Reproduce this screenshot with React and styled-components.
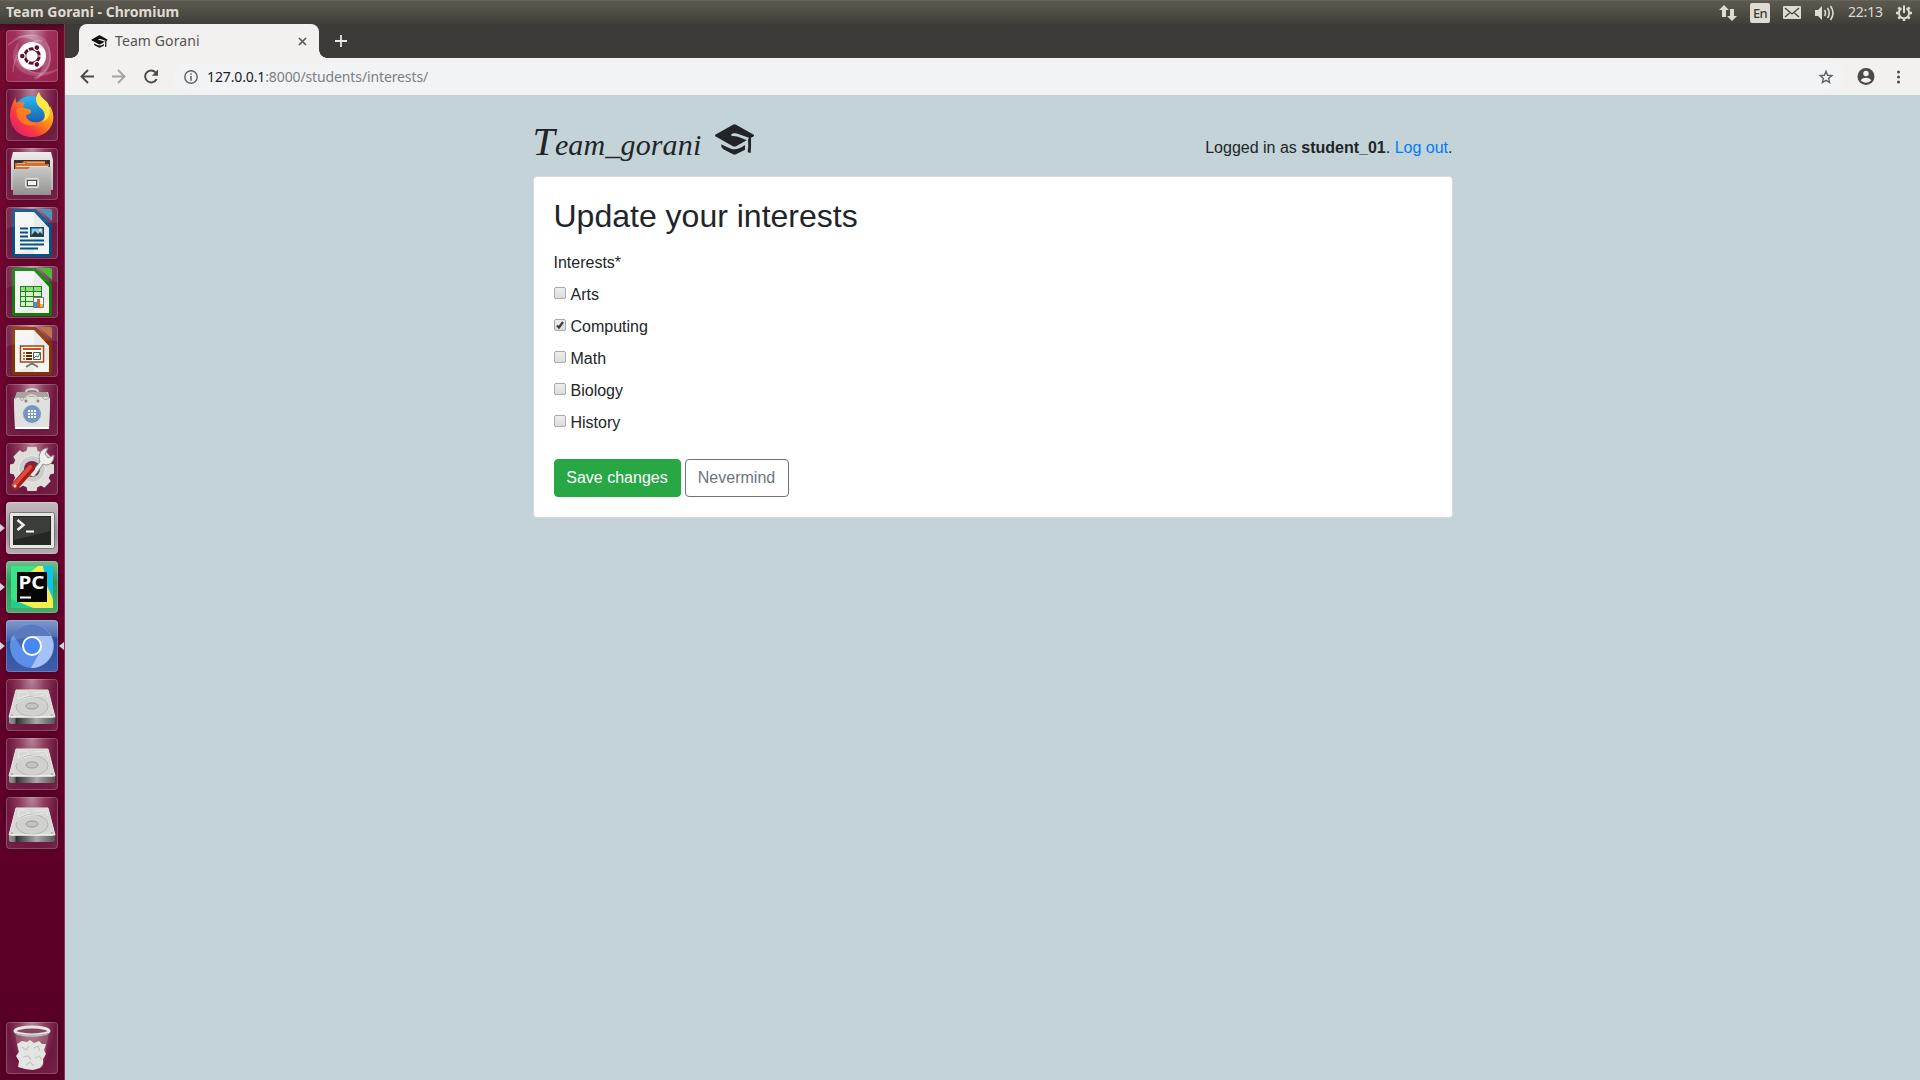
import React from "react";
import styled, { createGlobalStyle } from "styled-components";

const Global = createGlobalStyle`
  *, *::before, *::after { box-sizing: border-box; }
  body { margin: 0; background: #c3d3d7; overflow: hidden; font-family: "Liberation Sans", Arial, sans-serif; }
  svg { display: block; flex: none; }
`;

const Desktop = styled.div`
  display: flex; flex-direction: column; width: 1920px; height: 1080px; overflow: hidden;
`;
const Panel = styled.header`
  display: flex; align-items: center; justify-content: space-between; height: 24px; flex: none;
  padding: 0 8px 0 6px; border-top: 1px solid #66645a;
  background: linear-gradient(#5c5a50, #403e39);
  color: #dfdbd2; font-family: "Noto Sans", sans-serif;
`;
const WindowTitle = styled.span`
  font-size: 14px; font-weight: 700; line-height: 22px; height: 24px; letter-spacing: 0.02px; white-space: nowrap;
`;
const Tray = styled.div`display: flex; align-items: center; height: 22px;`;
const TrayItem = styled.div`margin-left: ${(p) => p.$gap}px; flex: none;`;
const Language = styled.div`
  width: 20px; height: 20px; border-radius: 2px; background: #dfdbd2; color: #3c3b37;
  font: 500 13px/21px "Noto Sans", sans-serif; text-align: center; letter-spacing: -0.8px;
`;
const Clock = styled.div`
  width: 35px; height: 24px; font-size: 14px; line-height: 22px; white-space: nowrap; letter-spacing: -0.2px;
`;
const Workspace = styled.div`display: flex; flex: 1; min-height: 0;`;

const Launcher = styled.nav`
  display: flex; flex-direction: column; width: 65px; flex: none; padding: 6px 0 6px;
  border-right: 1px solid #8c3057;
  background: linear-gradient(#4a0820 0, #720a2e 8px, #6e0530 300px, #64002b 620px, #570025 100%);
`;
const Slot = styled.div`
  display: flex; align-items: center; height: 52px; flex: none; margin-bottom: 7px;
  &:last-child { margin: auto 0 0; }
`;
const Marker = styled.i`
  width: 0; height: 0; margin-right: ${(p) => (p.$end ? 0 : 1)}px; margin-left: ${(p) => (p.$end ? 1 : 0)}px;
  border: 4px solid transparent; border-${(p) => (p.$end ? "right" : "left")}: 5px solid ${(p) => (p.$on ? "#d9d3d6" : "transparent")};
  border-${(p) => (p.$end ? "left" : "right")}: 0;
`;
const Tile = styled.div`
  width: 52px; height: 52px; border-radius: 4px; overflow: hidden;
  background: ${(p) => p.$bg || "radial-gradient(ellipse at 50% 0, #b8869b 0, #8b3c5c 35%, #6f1740 65%, #742447 100%)"};
  box-shadow: inset 0 0 0 1px rgba(255,255,255,.2), 0 0 4px rgba(40,0,20,.55);
`;

const Browser = styled.section`display: flex; flex-direction: column; flex: 1; min-width: 0;`;
const TabStrip = styled.div`
  display: flex; align-items: center; height: 34px; flex: none; padding-left: 14px; background: #3d3b37;
`;
const Tab = styled.div`
  display: flex; align-items: center; position: relative; width: 240px; height: 34px; padding: 0 12px 0 12px;
  border-radius: 8px 8px 0 0; background: #f2f1f0; color: #555350;
  &::before, &::after {
    content: ""; position: absolute; bottom: 0; width: 8px; height: 8px;
  }
  &::before { left: -8px; background: radial-gradient(circle at 0 0, transparent 7.5px, #f2f1f0 8px); }
  &::after { right: -8px; background: radial-gradient(circle at 100% 0, transparent 7.5px, #f2f1f0 8px); }
`;
const TabTitle = styled.span`
  flex: 1; margin-left: 7px; font: 14px/34px "Noto Sans", sans-serif; letter-spacing: 0.1px; white-space: nowrap;
`;
const NewTab = styled.div`margin-left: 16px;`;
const Toolbar = styled.div`
  display: flex; align-items: center; height: 37px; flex: none; padding: 0 15px 0 15px; background: #f2f1f0;
`;
const NavButtons = styled.div`display: flex; gap: 18px; margin-right: 14px;`;
const Omnibox = styled.div`
  display: flex; align-items: center; flex: 1; height: 28px; border-radius: 14px; padding: 0 10px 0 11px; background: #f1f3f5;
`;
const Url = styled.span`
  flex: 1; margin-left: 9px; font: 14px/28px "Noto Sans", sans-serif; letter-spacing: -0.12px; color: #7d8084; white-space: nowrap;
`;
const Host = styled.span`color: #202124;`;
const ToolbarEnd = styled.div`display: flex; align-items: center; gap: 13px; margin-left: 13px;`;

const Page = styled.main`flex: 1; background: #c3d3d7; color: #212529; font-size: 16px; line-height: 24px;`;
const Container = styled.div`width: 920px; margin: 0 auto;`;
const Masthead = styled.div`display: flex; justify-content: space-between; height: 81px;`;
const Brand = styled.div`display: flex; padding-top: 25px;`;
const BrandName = styled.span`
  width: 181.5px; font: italic 400 30px/44px "Liberation Serif", serif; letter-spacing: 0.15px; white-space: nowrap;
  &::first-letter { font-size: 40px; }
`;
const CapHolder = styled.div`padding-top: 4px;`;
const Account = styled.div`padding-top: 41px; white-space: nowrap;`;
const Link = styled.a`color: #007bff; text-decoration: none;`;
const Card = styled.div`
  height: 342px; padding: 20px; background: #fff; border: 1px solid #d5dadc; border-radius: 4px;
`;
const Heading = styled.h2`margin: 0 0 16px; font-size: 32px; font-weight: 400; line-height: 38px;`;
const Legend = styled.div`height: 24px; margin-bottom: 8px;`;
const Option = styled.label`display: flex; align-items: flex-start; height: 24px; margin-bottom: 8px;`;
const Box = styled.span`
  display: block; width: 12px; height: 12px; margin: 4px 5px 0 0; border: 1px solid #aaa; border-radius: 2px;
  background: linear-gradient(#ededed, #dcdcdc); flex: none;
`;
const Actions = styled.div`display: flex; gap: 4px; margin-top: 24px;`;
const Button = styled.button`
  width: ${(p) => p.$w}px; height: 38px; padding: 0; border-radius: 4px; font: 16px/24px "Liberation Sans", Arial, sans-serif;
  border: 1px solid ${(p) => (p.$primary ? "#28a745" : "#6c757d")};
  background: ${(p) => (p.$primary ? "#28a745" : "#fff")}; color: ${(p) => (p.$primary ? "#fff" : "#6c757d")};
`;

const Icon = ({ children, w = 52, h = 52, box }) => (
  <svg width={w} height={h} viewBox={box || `0 0 ${w} ${h}`} fill="none">{children}</svg>
);

const GradCap = ({ w, h, color, bg }) => (
  <Icon w={w} h={h} box="0 0 41 31">
    <path d="M1.7 10.4 18.5.9q2-1.1 4 0l16.8 9.5q1.5 1 0 2l-16.8 9.5q-2 1.100-4 0L1.7 12.4q-1.5-1 0-2Z" fill={color} />
    <path d="M17 10.7c2-2 5-1.700 8-.4l12 4.200-2 2.500-11-4.200c-3-.9-6 .1-7-2.100Z" fill={bg} />
    <path d="M7 20.500c4.500 1.200 8.500 4.800 13.500 4.800s9-3.600 10.500-4v4.500L22 30.200q-1.500.8-3 0L9.300 25.300Q7 24 7 20.500Z" fill={color} />
    <path d="m34 15 3-2.500q.3 9-.3 16.500l-3-.8q1-6 .3-13.200Z" fill={color} />
  </Icon>
);

const Ubuntu = () => (
  <Icon>
    <path d="M2 15C19 0 39 2 43 19s-5 26-15 29M7 42C8 23 20 9 36 11M51 40C31 48 12 40 10 25" stroke="#fff" strokeOpacity=".2" strokeWidth="1.500" />
    <path d="M2 13C18-2 44 5 45 26 46 38 38 47 28 50 40 40 42 18 26 10 17 6 8 7 2 13Z" fill="#fff" opacity=".2" />
    <path d="M50 41C35 51 9 46 7 28 6 22 9 16 13 12c-4 14 5 29 18 31 8 1 15 0 19-2Z" fill="#fff" opacity=".16" />
    <circle cx="26" cy="26" r="14" fill="#fff" />
    <circle cx="26" cy="26" r="7.200" stroke="#620d31" strokeWidth="3" />
    {[60, 180, 300].map((a) => (
      <g key={a} transform={`rotate(${a} 26 26)`}>
        <circle cx="35.500" cy="26" r="3.200" fill="#fff" />
        <circle cx="35.700" cy="26" r="2.300" fill="#620d31" />
      </g>
    ))}
    {[0, 120, 240].map((a) => <path key={a} d="M31.500 26h4" stroke="#fff" strokeWidth="1.200" transform={`rotate(${a} 26 26)`} />)}
  </Icon>
);

const Firefox = () => (
  <Icon>
    <defs>
      <linearGradient id="fox" x1="44" y1="8" x2="10" y2="43" gradientUnits="userSpaceOnUse">
        <stop stopColor="#ffdf2e" /><stop offset=".42" stopColor="#ff9115" /><stop offset=".75" stopColor="#fa3741" /><stop offset="1" stopColor="#e52270" />
      </linearGradient>
      <linearGradient id="globe" x2="0" y2="1"><stop stopColor="#28b8f2" /><stop offset="1" stopColor="#123e9b" /></linearGradient>
    </defs>
    <circle cx="25" cy="25" r="18" fill="url(#globe)" />
    <path d="M10 8c-1 3 0 5 1 6 2-1 6-1 8 0-2 2-2 4-1 6 3 0 6 0 7 2s-3 4-5 4c0 5 7 9 13 7 7-2 7-9 3-13-6-4-8-11-3-17 1 6 7 8 9 12 1 2 2 4 2 2 3 5 4 10 3 15-2 10-11 16-21 16C13 48 4 39 4 26c0-5 2-12 6-18Z" fill="url(#fox)" />
    <path d="M33 3c-5 6-3 13 3 17 4 4 4 10 0 13 9-3 10-12 5-20-3-3-7-5-8-10Z" fill="#ffe84a" />
    <path d="M10 20c6-3 14 0 15 2-1 3-5 3-5 4-1 5 7 9 13 7-6 6-19 4-22-6Z" fill="#ff8c1e" opacity=".7" />
  </Icon>
);

const Files = () => (
  <Icon>
    <defs>
      <linearGradient id="metal" x2="0" y2="1"><stop stopColor="#eee" /><stop offset="1" stopColor="#b0b0ad" /></linearGradient>
      <linearGradient id="drawer" x2="0" y2="1"><stop stopColor="#c9c9c7" /><stop offset="1" stopColor="#929290" /></linearGradient>
    </defs>
    <path d="M7 4h38l2 8v30H5V12Z" fill="url(#metal)" />
    <path d="M8 12h36v10H8Z" fill="#37332e" />
    <path d="M9 15h7l2-2h21v3h4v6H9Z" fill="#cf7032" />
    <path d="M10 18.500h32" stroke="#f7dcc0" /><path d="M11 15.500h8m2-1h18" stroke="#e9a877" />
    <path d="M7 21h15l2-2h21v28H7Z" fill="url(#drawer)" />
    <rect x="19.500" y="30.500" width="13" height="9" rx="1" fill="#bbb" stroke="#e4e4e4" />
    <rect x="21.500" y="32.500" width="9" height="5" fill="#f5f5f5" stroke="#555" />
  </Icon>
);

const Doc = ({ color, fold, children }) => (
  <Icon>
    <path d="M8 2h22l16 16v30q0 2-2 2H8q-2 0-2-2V4q0-2 2-2Z" fill={color} />
    <path d="M9 5h19l15 16v26H9Z" fill="#f5f5f4" />
    <path d="M28 5v42H9l34-12V21Z" fill="#ccc" opacity=".28" />
    <path d="M33 2h11q2 0 2 2v10Z" fill={fold} />
    {children}
    <path d="M0 0h52v16Q24 14 0 22Z" fill="#fff" opacity=".09" />
  </Icon>
);
const Writer = () => (
  <Doc color="#075187" fold="#3c8ab8">
    <path d="M14 21.500h8M14 25.500h8M14 29.500h8M14 33.500h24M14 37.500h24M14 41.500h18" stroke="#075187" strokeWidth="2" />
    <path d="M24 20h14v10H24Z" fill="#064b7d" /><path d="M25.500 21.500h11v7h-11Z" fill="#8acaf0" />
    <path d="m25 29 4-5 3 3 2-2 4 4Z" fill="#333" /><circle cx="34.500" cy="23" r="1.500" fill="#ffe57c" />
  </Doc>
);
const Calc = () => (
  <Doc color="#137a0b" fold="#36b629">
    <path d="M14 20h22v21H14Z" fill="#19851c" />
    {[21, 26, 31, 36].map((y, i) => <path key={y} d={`M15 ${y}h4v4h-4Zm5 0h7v4h-7Zm8 0h7v4h-7Z`} fill={i ? "#d4f4c6" : "#94db84"} />)}
    <path d="M27.500 31.500h10v10h-10Z" fill="#f6f6f6" stroke="#777" />
    <path d="M28 36h3v5h-3Z" fill="#249be5" /><path d="M31 33h3v8h-3Z" fill="#e35b23" /><path d="M34 38h3v3h-3Z" fill="#f4b61c" />
  </Doc>
);
const Impress = () => (
  <Doc color="#853400" fold="#b76835">
    <path d="M14.500 21h23v16h-23Z" fill="#fff" stroke="#a94309" strokeWidth="1.500" />
    <path d="M17 24h18" stroke="#c4571b" strokeWidth="2" />
    <path d="M17 28h2m-2 3h2m-2 3h2" stroke="#e36a2c" strokeWidth="2" />
    <path d="M20 28h6m-6 3h6m-6 3h6" stroke="#6b2707" strokeWidth="2" />
    <path d="M27.500 27.500h7v7h-7Z" fill="#f3f3f3" stroke="#555" /><path d="m28 33 2-2 2 1 2-4" stroke="#1a9a2a" />
    <path d="M26 37v2m-6 3 5-3h2l5 3" stroke="#777" strokeWidth="2" />
  </Doc>
);
const Software = () => (
  <Icon>
    <path d="M11 8h31l2 9-1 28H9L8 17Z" fill="#dfdfdc" />
    <path d="m11 8-3 9 5-4 3 5 4-5h23l-2-5Z" fill="#a4a4a1" />
    <path d="M8 14h36l-1 31H9Z" fill="#e0e0dc" /><path d="M9 44h34" stroke="#fff" strokeWidth="2" />
    <path d="m9 15 3-4 4 6 3-5h16l4 4 4-2" stroke="#aaaaa6" strokeWidth="1" />
    <path d="M20 8c0-4 12-4 12 0M19 17c1-8 12-8 13 0" stroke="#d2d2cd" strokeWidth="2" />
    <circle cx="20" cy="17" r="1.500" fill="#888" /><circle cx="32" cy="17" r="1.500" fill="#888" />
    <circle cx="26" cy="30" r="9" fill="#7297c7" />
    {[26, 29, 32].map((y) => <path key={y} d={`M22 ${y}h2v2h-2Zm3 0h2v2h-2Zm3 0h2v2h-2Z`} fill="#fff" />)}
  </Icon>
);
const Settings = () => (
  <Icon>
    {[0, 45, 90, 135].map((a) => <path key={a} d="M21.500 4h9l1 4v36l-1 4h-9l-1-4V8Z" fill="#dddddb" transform={`rotate(${a} 26 26)`} />)}
    <circle cx="26" cy="26" r="19" fill="#dedddb" /><circle cx="26" cy="26" r="13.500" fill="#cbcbc9" stroke="#eee" />
    <circle cx="26" cy="26" r="8" fill="#73294d" />
    <path d="m23 32 11-13c-3-8 2-14 8-14l-3 6 3 4 6-3c0 8-6 12-11 9L28 34Z" fill="#eeeeec" stroke="#8f8f8c" />
    <path d="m9 43 16-18" stroke="#a61d1d" strokeWidth="8" strokeLinecap="round" />
    <path d="m8 42 16-18" stroke="#e4493d" strokeWidth="4" strokeLinecap="round" />
    <circle cx="9" cy="43" r="1.500" fill="#eee" />
  </Icon>
);
const Terminal = () => (
  <Icon>
    <rect x="3.500" y="10.500" width="45" height="36" rx="2" fill="#e8e6e4" stroke="#777" />
    <path d="M7 14h38v29H7Z" fill="#252725" /><path d="M8 15h36v14L8 38Z" fill="#555854" opacity=".45" />
    <path d="m11.500 18 6 5-6 5" stroke="#eee" strokeWidth="2.500" /><path d="M20 29.500h8" stroke="#fff" strokeWidth="2" />
  </Icon>
);
const PcText = styled.text`font: 700 18px "Noto Sans", sans-serif; fill: #fff;`;
const PyCharm = () => (
  <Icon>
    <path d="M5 5h42v42H5Z" fill="#35dc84" /><path d="M5 5h30L14 40H5Z" fill="#3be28a" />
    <path d="m22 13 10-8h5l5 18 5 16v8H27l-15-6Z" fill="#f5ef4d" /><path d="M37 5h10v32l-6-12Z" fill="#0fc5e7" />
    <path d="M5 38v9h22Z" fill="#28cb8a" />
    <path d="M11 11h30v30H11Z" fill="#050505" /><PcText x="12.500" y="28" textLength="26" lengthAdjust="spacingAndGlyphs">PC</PcText><path d="M14 36.500h11" stroke="#fff" strokeWidth="2" />
  </Icon>
);
const Chromium = () => (
  <Icon>
    <circle cx="26" cy="26" r="22" fill="#5d8fe8" />
    <path d="M7 15a22 22 0 0 1 38 1H26L18 31Z" fill="#4268b4" />
    <path d="M45 16H26l9 14-10 18a22 22 0 0 0 20-32Z" fill="#a5c2f6" />
    <circle cx="26" cy="26" r="10" fill="#fff" /><circle cx="26" cy="26" r="8" fill="#4688f1" />
    <path d="M0 0h52v17Q27 14 0 22Z" fill="#fff" opacity=".12" />
  </Icon>
);
const Disk = () => (
  <Icon>
    <defs><linearGradient id="edge" x2="1"><stop stopColor="#999" /><stop offset=".12" stopColor="#777" /><stop offset=".16" stopColor="#303030" /><stop offset=".6" stopColor="#aaa" /><stop offset="1" stopColor="#555" /></linearGradient></defs>
    <path d="M3 38h46v5q0 2-2 2H5q-2 0-2-2Z" fill="url(#edge)" />
    <path d="M10 11h32l7 27H3Z" fill="#d7d7d5" stroke="#e6e6e6" />
    <ellipse cx="26" cy="27.500" rx="16" ry="10" fill="#d1d1d0" stroke="#b4b4b4" />
    <path d="m13 13 8 0 2 3-11 4Zm14 1 13-1 2 6M10 25c7-9 24-6 29-10" stroke="#eee" strokeWidth=".8" />
    <ellipse cx="26" cy="27" rx="6" ry="3" fill="#c4c4c4" stroke="#999" /><path d="M5 38h42" stroke="#fff" />
    <circle cx="6" cy="36" r=".8" fill="#888" /><circle cx="46" cy="36" r=".8" fill="#888" />
  </Icon>
);
const Trash = () => (
  <Icon>
    <path d="m9 10 5 35q11 5 23 0l6-35Z" fill="#ddd" opacity=".22" />
    <path d="m11 22 5-3 5 1 3-2 4 3 5-2 3 3 4 0-2 6 2 4-3 5v5l-3 4-7 2-8-1-7-2 1-6-3-5 3-4Z" fill="#e4e4e2" />
    <path d="m16 25 4 3 3-4M28 26l4-2 2 5M17 35l5-1 3 4M29 36l4-2 3 4M20 43l4-3 4 4" stroke="#c4c4c0" strokeWidth="1.200" />
    <ellipse cx="26" cy="9" rx="17" ry="4" fill="#874564" stroke="#e5e5e3" strokeWidth="3" />
    <path d="M9 11c5 3 29 3 34 0" stroke="#aaa" />
  </Icon>
);

const APPS = [
  { art: Ubuntu, bg: "radial-gradient(ellipse at 50% 0,#c18ba0,#a1305c 45%,#97204c)" },
  { art: Firefox }, { art: Files }, { art: Writer }, { art: Calc }, { art: Impress }, { art: Software }, { art: Settings },
  { art: Terminal, bg: "linear-gradient(#c5bcc0,#9c8c94 60%,#b9abb2)", running: true },
  { art: PyCharm, bg: "linear-gradient(#73bd91,#2d9c5b 40%,#47ab6d)", running: true },
  { art: Chromium, bg: "linear-gradient(#708cc9,#2d4f9b 40%,#415eac)", running: true, focused: true },
  { art: Disk }, { art: Disk }, { art: Disk }, { art: Trash },
];
const OPTIONS = [["Arts"], ["Computing", true], ["Math"], ["Biology"], ["History"]];

export default function App() {
  return (
    <Desktop>
      <Global />
      <Panel>
        <WindowTitle>Team Gorani - Chromium</WindowTitle>
        <Tray>
          <Icon w={18} h={18}><path d="M5 1 0 6h3v7h4V6h3Zm8 16 5-5h-3V5h-4v7H8Z" fill="#dfdbd2" /></Icon>
          <TrayItem $gap={13}><Language>En</Language></TrayItem>
          <TrayItem $gap={13}><Icon w={18} h={13}><rect width="18" height="13" rx="1" fill="#dfdbd2" /><path d="m2 2 7 6 7-6M2 11l4.500-4M16 11l-4.500-4" stroke="#45433d" strokeWidth="1.300" /></Icon></TrayItem>
          <TrayItem $gap={13}><Icon w={21} h={18}><path d="M1 6h3l4-4v14l-4-4H1Z" fill="#dfdbd2" /><path d="M10.500 6q2 3 0 6M13.500 4q3.500 5 0 10M16.500 2q5 7 0 14" stroke="#dfdbd2" strokeWidth="1.600" /></Icon></TrayItem>
          <TrayItem $gap={13}><Clock>22:13</Clock></TrayItem>
          <TrayItem $gap={13}><Icon w={16} h={18}>
            {[45, 90, 135, 180, 225, 270, 315].map((a) => <path key={a} d="M8 1v3" stroke="#dfdbd2" strokeWidth="2.600" transform={`rotate(${a} 8 9)`} />)}
            <path d="M5.500 4.400a5.200 5.200 0 1 0 5 0M8 1.500V9" stroke="#dfdbd2" strokeWidth="2" />
          </Icon></TrayItem>
        </Tray>
      </Panel>
      <Workspace>
        <Launcher>
          {APPS.map(({ art: Art, bg, running, focused }, i) => (
            <Slot key={i}><Marker $on={running} /><Tile $bg={bg}><Art /></Tile><Marker $end $on={focused} /></Slot>
          ))}
        </Launcher>
        <Browser>
          <TabStrip>
            <Tab>
              <GradCap w={17} h={15} color="#111" bg="#f2f1f0" />
              <TabTitle>Team Gorani</TabTitle>
              <Icon w={9} h={9}><path d="m1 1 7 7m0-7-7 7" stroke="#5b5a57" strokeWidth="1.700" /></Icon>
            </Tab>
            <NewTab><Icon w={12} h={12}><path d="M6 0v12M0 6h12" stroke="#e9e7e1" strokeWidth="1.800" /></Icon></NewTab>
          </TabStrip>
          <Toolbar>
            <NavButtons>
              <Icon w={14} h={16}><path d="M14 7.500H1.500M8 1 1.500 7.500 8 14" stroke="#4b4a48" strokeWidth="1.900" /></Icon>
              <Icon w={14} h={16}><path d="M0 7.500h12.500M6 1l6.500 6.500L6 14" stroke="#a5a4a2" strokeWidth="1.900" /></Icon>
              <Icon w={15} h={16}><path d="M12.600 10A6 6 0 1 1 11.500 3.300" stroke="#4b4a48" strokeWidth="1.900" /><path d="M14 .5v6.200H7.800Z" fill="#4b4a48" /></Icon>
            </NavButtons>
            <Omnibox>
              <Icon w={14} h={14}><circle cx="7" cy="7" r="6.200" stroke="#5f6368" strokeWidth="1.400" /><path d="M7 3.200v1.600M7 6v4.800" stroke="#5f6368" strokeWidth="1.500" /></Icon>
              <Url><Host>127.0.0.1</Host>:8000/students/interests/</Url>
              <Icon w={16} h={16}><path d="m8 2.300 1.600 4 4.200.3-3.200 2.800 1 4.200L8 11.400l-3.600 2.200 1-4.200-3.200-2.800 4.200-.3Z" stroke="#5f6368" strokeWidth="1.400" /></Icon>
            </Omnibox>
            <ToolbarEnd>
              <Icon w={18} h={18}><circle cx="9" cy="8.500" r="8.500" fill="#4b4a48" /><circle cx="9" cy="5.500" r="2.700" fill="#f2f1f0" /><path d="M3.700 12.300c2.200-3.300 8.400-3.300 10.600 0-2.400 3.200-8.200 3.200-10.600 0Z" fill="#f2f1f0" /></Icon>
              <Icon w={17} h={16}><circle cx="10.500" cy="3" r="1.500" fill="#4b4a48" /><circle cx="10.500" cy="8" r="1.500" fill="#4b4a48" /><circle cx="10.500" cy="13" r="1.500" fill="#4b4a48" /></Icon>
            </ToolbarEnd>
          </Toolbar>
          <Page>
            <Container>
              <Masthead>
                <Brand><BrandName>Team_gorani</BrandName><CapHolder><GradCap w={41} h={31} color="#212529" bg="#c3d3d7" /></CapHolder></Brand>
                <Account>Logged in as <strong>student_01</strong>. <Link>Log out</Link>.</Account>
              </Masthead>
              <Card>
                <Heading>Update your interests</Heading>
                <Legend>Interests*</Legend>
                {OPTIONS.map(([label, checked]) => (
                  <Option key={label}>
                    <Box>{checked && <Icon w={10} h={10}><path d="m2 5.500 2 2L8 2" stroke="#404040" strokeWidth="2.300" /></Icon>}</Box>
                    {label}
                  </Option>
                ))}
                <Actions><Button $primary $w={127}>Save changes</Button><Button $w={104}>Nevermind</Button></Actions>
              </Card>
            </Container>
          </Page>
        </Browser>
      </Workspace>
    </Desktop>
  );
}
